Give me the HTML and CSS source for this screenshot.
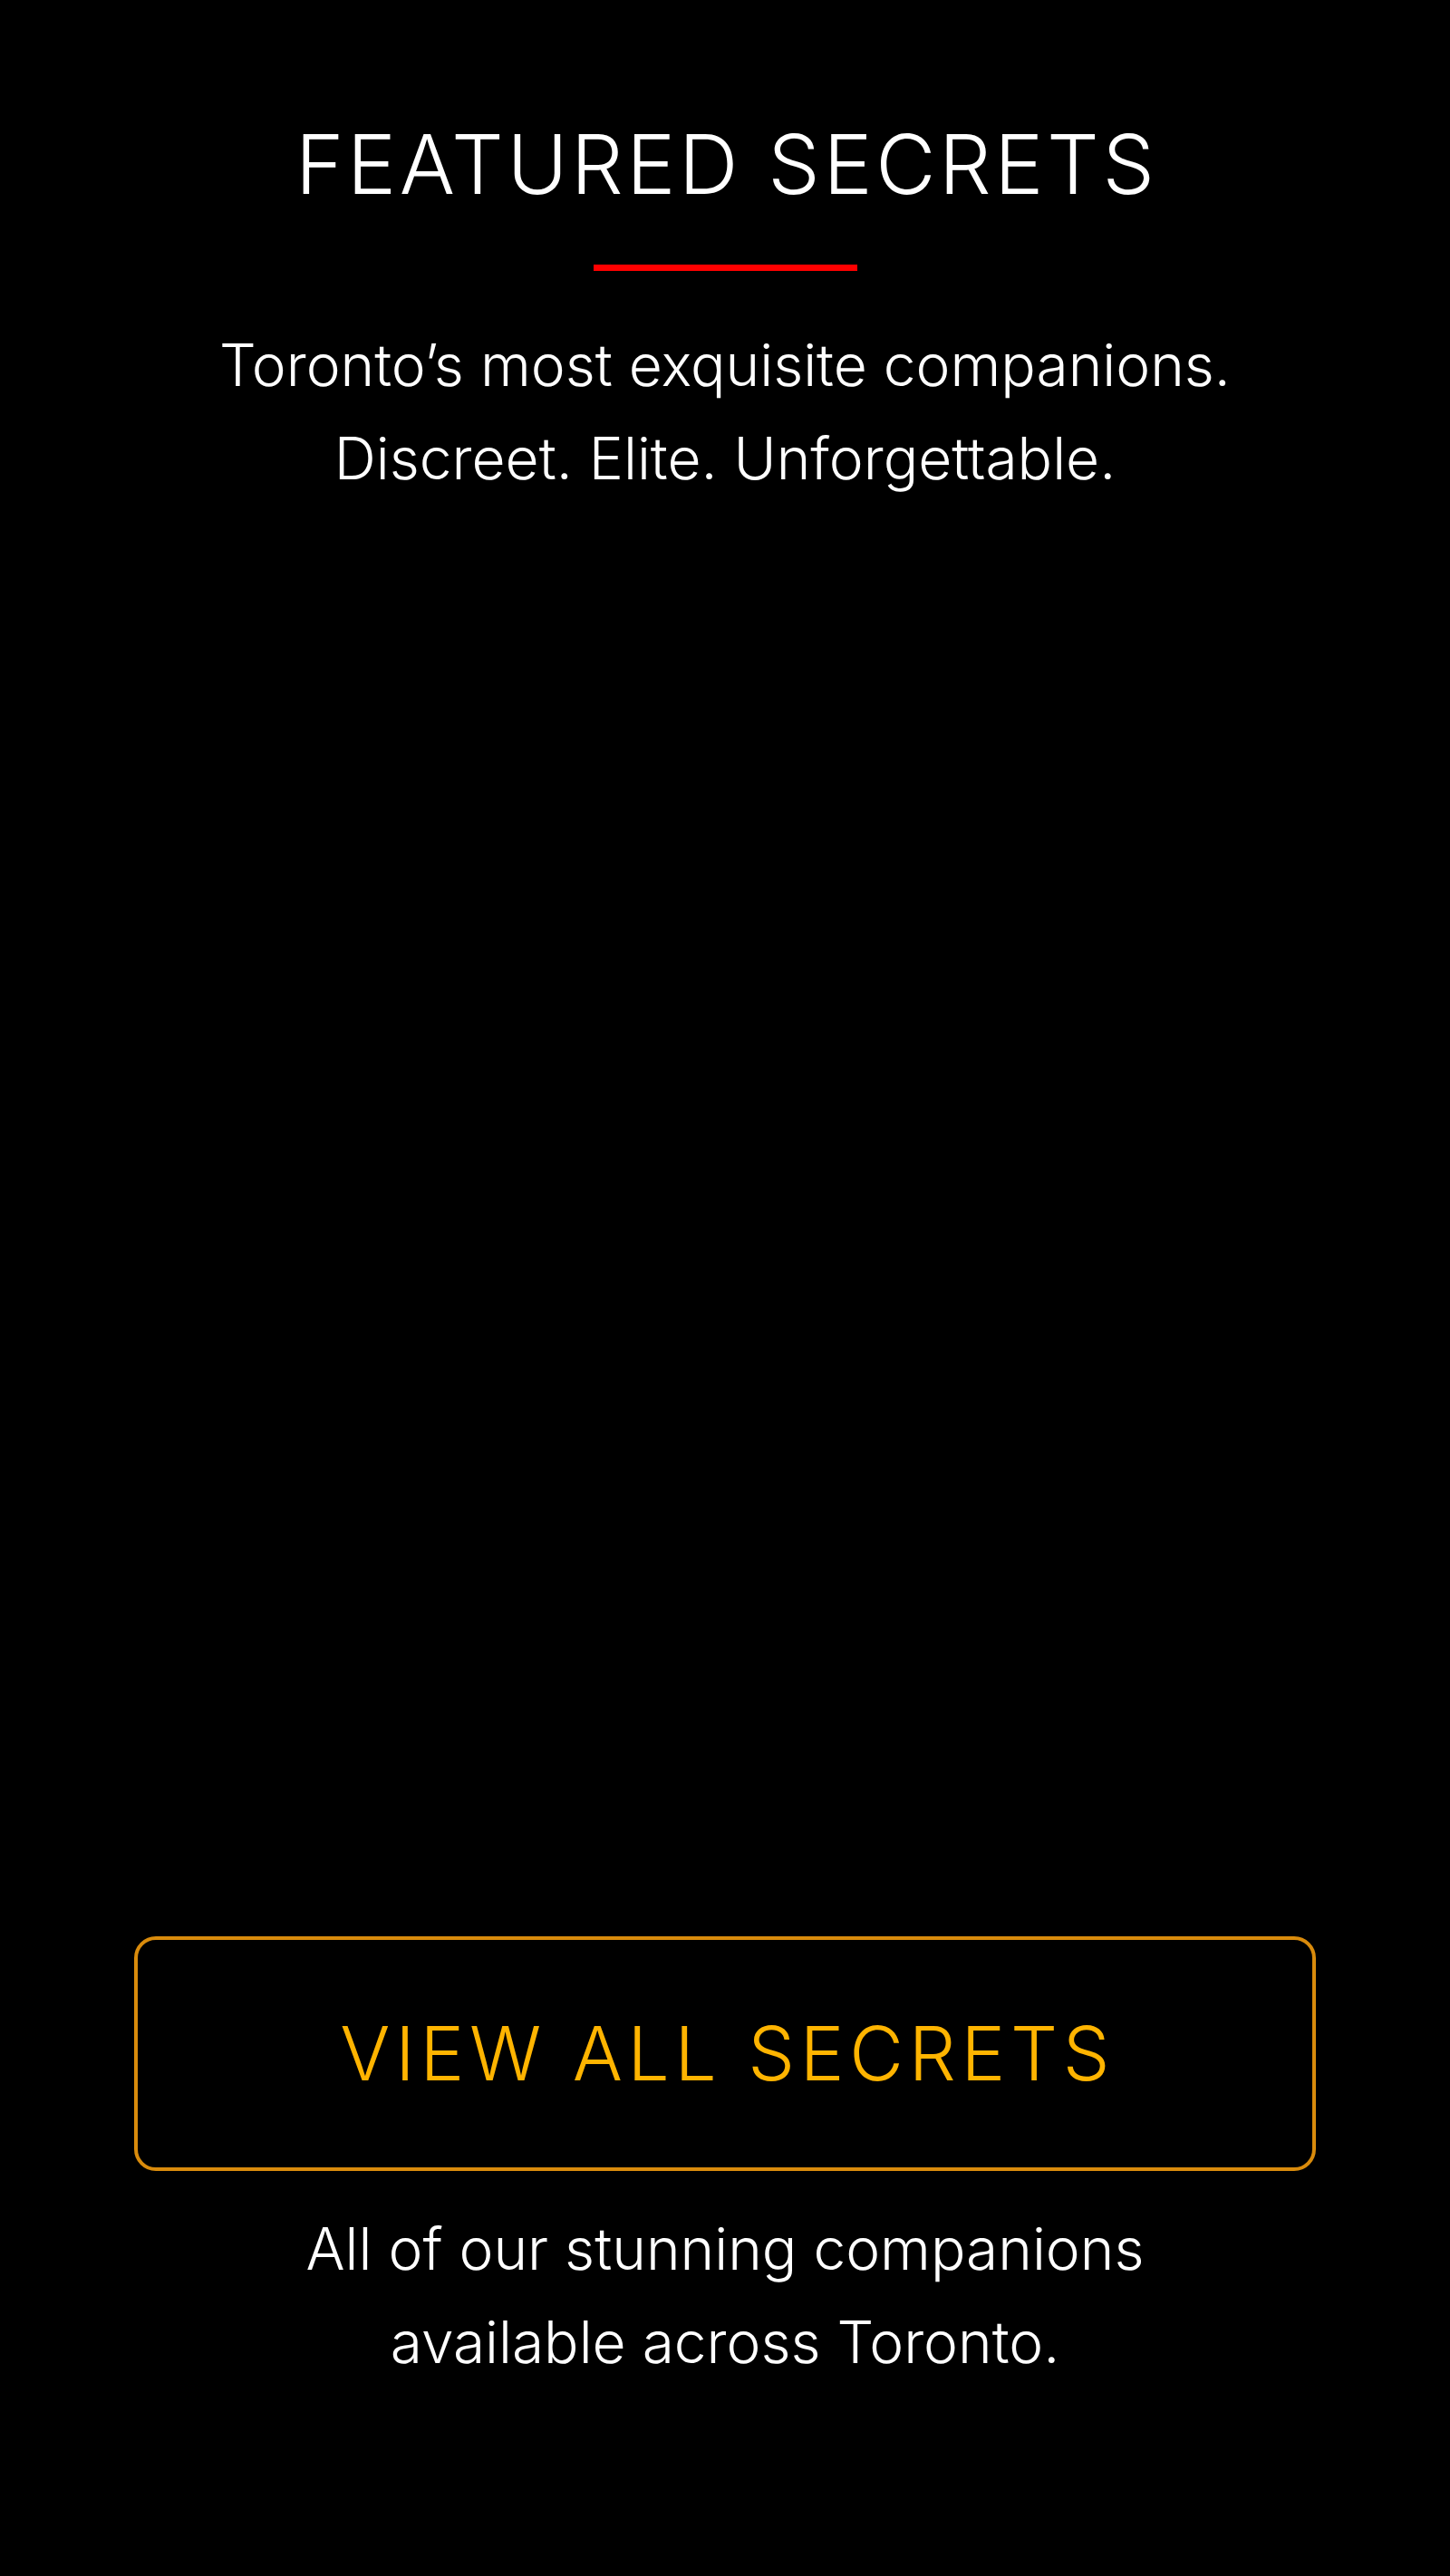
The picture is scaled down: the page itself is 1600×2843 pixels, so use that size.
FILE: index.html
```html
<!DOCTYPE html>
<html lang="en">
<head>
<meta charset="utf-8">
<title>Featured Secrets</title>
<link rel="stylesheet" href="styles.css">
</head>
<body>
<section class="featured">
  <header class="featured-head">
    <h2 class="featured-title">FEATURED SECRETS</h2>
    <div class="featured-rule"></div>
    <p class="featured-sub">Toronto’s most exquisite companions.<br>Discreet. Elite. Unforgettable.</p>
  </header>
  <div class="featured-grid"></div>
  <div class="featured-cta">
    <a class="cta-button" href="#">VIEW ALL SECRETS</a>
    <p class="cta-note">All of our stunning companions<br>available across Toronto.</p>
  </div>
</section>
</body>
</html>
```
FILE: styles.css
```css
html, body {
  margin: 0;
  padding: 0;
  background: #000;
}
body {
  font-family: "Inter", "Lato", "Liberation Sans", sans-serif;
  color: #fff;
  min-height: 2843px;
}
.featured {
  display: flex;
  flex-direction: column;
  align-items: center;
  padding: 126px 148px 0;
}
.featured-head {
  display: flex;
  flex-direction: column;
  align-items: center;
}
.featured-title {
  margin: 0;
  font-weight: 300;
  font-size: 91px;
  line-height: 110px;
  letter-spacing: 3.6px;
  text-indent: 3.6px;
  text-align: center;
}
.featured-rule {
  width: 291px;
  height: 7px;
  background: #ff0000;
  margin-top: 56px;
}
.featured-sub {
  margin: 52px 0 0;
  font-size: 64px;
  font-weight: 300;
  line-height: 103px;
  text-align: center;
}
.featured-grid {
  height: 1580px;
  align-self: stretch;
}
.cta-button {
  box-sizing: border-box;
  align-self: stretch;
  display: flex;
  align-items: center;
  justify-content: center;
  height: 259px;
  border: 4px solid #d98b0c;
  border-radius: 24px;
  color: #ffb400;
  text-decoration: none;
  font-size: 82px;
  font-weight: 300;
  letter-spacing: 5.7px;
  text-indent: 5.7px;
}
.featured-cta {
  align-self: stretch;
  display: flex;
  flex-direction: column;
  align-items: center;
}
.cta-note {
  margin: 34px 0 0;
  font-size: 64px;
  font-weight: 300;
  line-height: 103px;
  text-align: center;
}
```
